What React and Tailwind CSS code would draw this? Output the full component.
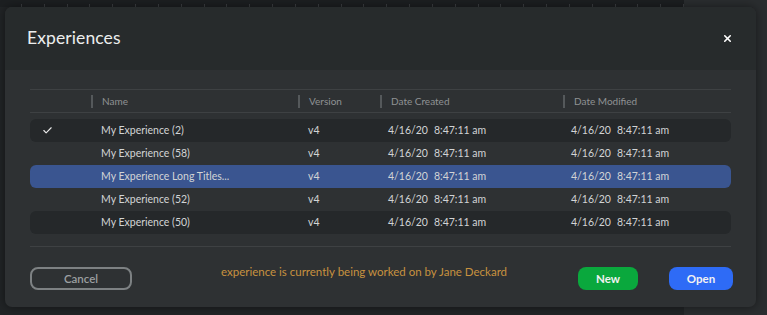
import React from 'react';
import { X, Check } from 'lucide-react';

const rows = [
  { name: 'My Experience (2)', checked: true, tone: 'dark' },
  { name: 'My Experience (58)', tone: 'none' },
  { name: 'My Experience Long Titles...', tone: 'selected' },
  { name: 'My Experience (52)', tone: 'none' },
  { name: 'My Experience (50)', tone: 'dark' },
];

const toneClass = {
  dark: 'bg-[#25282a]',
  none: '',
  selected: 'bg-[#3a5590]',
};

const cols = 'grid grid-cols-[61px_207px_82px_183px_1fr]';

function HeaderCell({ label }) {
  return (
    <div className="flex items-center">
      <span className="w-[2px] h-[13px] bg-[#55595b]" />
      <span className="pl-[9px]">{label}</span>
    </div>
  );
}

function DateCell() {
  return (
    <div className="flex items-center gap-[6px] pl-[8px]">
      <span>4/16/20</span>
      <span>8:47:11 am</span>
    </div>
  );
}

export default function App() {
  return (
    <div className="relative w-[767px] h-[315px] overflow-hidden bg-[#2a2d2f] font-['Lato','Noto_Sans',sans-serif]">
      {/* backdrop */}
      <div className="absolute left-0 top-0 w-[684px] h-[315px] bg-[#212426]">
        <div className="flex h-[7px] bg-[#1c1f21] pl-[21px] gap-[22px]">
          {Array.from({ length: 30 }).map((_, i) => (
            <span key={i} className="w-px h-[3px] mt-[4px] bg-[#3a3d40]" />
          ))}
        </div>
      </div>

      {/* modal */}
      <div className="absolute left-[5px] top-[7px] w-[751px] h-[300px] rounded-[7px] overflow-hidden bg-[#2e3133] shadow-[0_0_10px_rgba(0,0,0,0.45)] flex flex-col">
        <div className="h-[63px] bg-[#272b2c] flex items-center justify-between pl-[22px] pr-[22px]">
          <h1 className="text-[17.5px] text-[#eceeee] tracking-[0.1px] pb-[1px]">Experiences</h1>
          <X size={11} strokeWidth={3.5} className="text-white mr-[1px]" />
        </div>

        <div className="px-[25px] pt-[19px]">
          <div className={`${cols} h-[24px] border-y border-[#3e4143] text-[10px] text-[#8e9193]`}>
            <div />
            <HeaderCell label="Name" />
            <HeaderCell label="Version" />
            <HeaderCell label="Date Created" />
            <HeaderCell label="Date Modified" />
          </div>

          <div className="pt-[6px] pb-[12px] border-b border-[#3e4143]">
            {rows.map((r) => (
              <div
                key={r.name}
                className={`${cols} h-[23px] items-center rounded-[6px] text-[10.5px] text-[#d2d4d5] ${toneClass[r.tone]}`}
              >
                <div className="flex pl-[12px]">
                  {r.checked && <Check size={11} strokeWidth={2.5} className="text-[#e6e6e6]" />}
                </div>
                <div className="pl-[10px]">{r.name}</div>
                <div className="pl-[10px]">v4</div>
                <DateCell />
                <DateCell />
              </div>
            ))}
          </div>
        </div>

        <div className="flex items-center pl-[25px] pr-[23px] pt-[16px]">
          <button className="w-[102px] h-[23px] rounded-[8px] border-2 border-[#7d8183] text-[11.5px] font-semibold text-[#9c9fa1]">
            Cancel
          </button>
          <p className="ml-[89px] mb-[13px] text-[11.5px] text-[#c8913f]">
            experience is currently being worked on by Jane Deckard
          </p>
          <div className="ml-auto flex gap-[31px]">
            <button className="w-[60px] h-[23px] rounded-[8px] bg-[#0aa83d] text-[11.5px] font-bold text-[#f2f2f2]">
              New
            </button>
            <button className="w-[64px] h-[23px] rounded-[8px] bg-[#2e6bf6] text-[11.5px] font-bold text-[#f2f2f2]">
              Open
            </button>
          </div>
        </div>
      </div>
    </div>
  );
}
